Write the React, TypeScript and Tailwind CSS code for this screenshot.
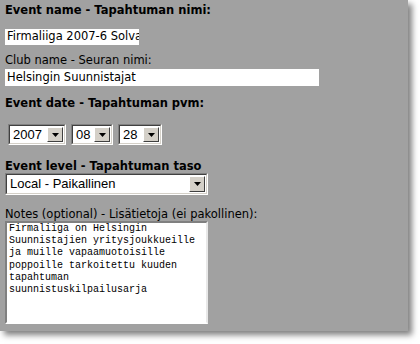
import React from "react";

const label = "font-['DejaVu_Sans',sans-serif] text-[11.5px] leading-[13px] text-black";
const field =
  "block bg-white pl-[2px] font-['DejaVu_Sans',sans-serif] text-[11.5px] text-black outline-none border-0";

function Arrow() {
  return (
    <div className="flex h-full w-[16px] items-center justify-center border-t border-l border-t-white border-l-white border-b border-r border-b-[#404040] border-r-[#404040] bg-[#d4d0c8]">
      <svg width="7" height="4" viewBox="0 0 7 4">
        <path d="M0 0h7L3.5 4z" fill="#000" />
      </svg>
    </div>
  );
}

function FakeSelect({ value, width, height }: { value: string; width: string; height: string }) {
  return (
    <div className={`${width} ${height} border border-t-[#808080] border-l-[#808080] border-b-white border-r-white`}>
      <div className="flex h-full w-full border border-t-[#404040] border-l-[#404040] border-b-[#d4d0c8] border-r-[#d4d0c8] bg-white">
        <div className="flex flex-1 items-center pl-[3px] font-['Liberation_Sans',sans-serif] text-[13px] text-black">
          {value}
        </div>
        <div className="py-px pr-px">
          <Arrow />
        </div>
      </div>
    </div>
  );
}

export default function App() {
  const notes = [
    "Firmaliiga on Helsingin",
    "Suunnistajien yritysjoukkueille",
    "ja muille vapaamuotoisille",
    "poppoille tarkoitettu kuuden",
    "tapahtuman",
    "suunnistuskilpailusarja",
  ];

  return (
    <div className="h-[344px] w-[420px] bg-white">
      <div className="flex h-[331px] w-[408px] flex-col bg-[#a1a1a1] pl-[5px] pt-[4px] shadow-[4px_4px_6px_rgba(0,0,0,0.5)]">
        <div className={`${label} font-bold`}>Event name - Tapahtuman nimi:</div>
        <input
          readOnly
          value="Firmaliiga 2007-6 Solvalla"
          className={`${field} mt-[12px] h-[16px] w-[134px]`}
        />

        <div className={`${label} mt-[9px]`}>Club name - Seuran nimi:</div>
        <input
          readOnly
          value="Helsingin Suunnistajat"
          className={`${field} mt-[2px] h-[17px] w-[314px]`}
        />

        <div className={`${label} mt-[11px] font-bold`}>Event date - Tapahtuman pvm:</div>
        <div className="ml-[3px] mt-[14px] flex gap-[5px]">
          <FakeSelect value="2007" width="w-[58px]" height="h-[21px]" />
          <FakeSelect value="08" width="w-[42px]" height="h-[21px]" />
          <FakeSelect value="28" width="w-[44px]" height="h-[21px]" />
        </div>

        <div className={`${label} mt-[15px] font-bold`}>Event level - Tapahtuman taso</div>
        <FakeSelect value="Local - Paikallinen" width="w-[203px]" height="h-[22px]" />

        <div className={`${label} mt-[13px]`}>Notes (optional) - Lisätietoja (ei pakollinen):</div>
        <div className="h-[103px] w-[203px] border-2 border-t-[#808080] border-l-[#808080] border-b-white border-r-[#e8e8e8]">
          <div className="h-full w-full overflow-hidden bg-white pl-[2px] font-['Liberation_Mono',monospace] text-[10px] leading-[12.2px] text-black">
            {notes.map((line) => (
              <div key={line}>{line}</div>
            ))}
          </div>
        </div>
      </div>
    </div>
  );
}
